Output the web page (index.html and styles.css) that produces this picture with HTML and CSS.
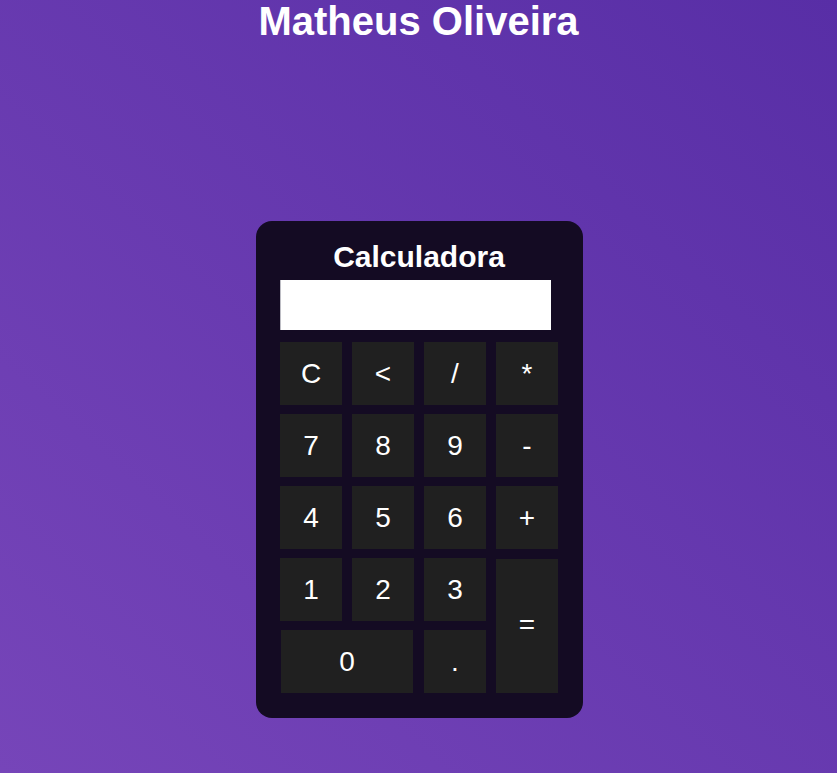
FILE: index.html
```html
<!DOCTYPE html>
<html lang="pt-BR">
<head>
<meta charset="UTF-8">
<title>Calculadora</title>
<link rel="stylesheet" href="styles.css">
</head>
<body>
<h1 class="page-title">Matheus Oliveira</h1>
<main class="calculator">
  <h2 class="calc-title">Calculadora</h2>
  <input class="display" type="text" readonly>
  <div class="keys">
    <button class="key">C</button>
    <button class="key">&lt;</button>
    <button class="key">/</button>
    <button class="key">*</button>
    <button class="key">7</button>
    <button class="key">8</button>
    <button class="key">9</button>
    <button class="key">-</button>
    <button class="key">4</button>
    <button class="key">5</button>
    <button class="key">6</button>
    <button class="key">+</button>
    <button class="key">1</button>
    <button class="key">2</button>
    <button class="key">3</button>
    <button class="key key-equal">=</button>
    <button class="key key-zero">0</button>
    <button class="key">.</button>
  </div>
</main>
</body>
</html>
```
FILE: styles.css
```css
html, body {
  margin: 0;
  padding: 0;
}
body {
  min-height: 773px;
  background: linear-gradient(to top right, #7645b9, #582ea6);
  font-family: "Liberation Sans", Arial, sans-serif;
  color: #fff;
  display: flex;
  flex-direction: column;
  align-items: center;
}
.page-title {
  margin: 0;
  font-size: 40px;
  line-height: 42px;
  font-weight: bold;
  text-align: center;
}
.calculator {
  margin-top: 179px;
  margin-left: 2px;
  width: 327px;
  box-sizing: border-box;
  padding: 18px 25px 25px 24px;
  background: #140b23;
  border-radius: 16px;
  display: flex;
  flex-direction: column;
}
.calc-title {
  margin: 0;
  font-size: 30px;
  line-height: 35px;
  font-weight: bold;
  text-align: center;
}
.display {
  margin-top: 6px;
  width: 271px;
  height: 50px;
  box-sizing: border-box;
  border: none;
  border-left: 1px solid #bdbdc4;
  background: #fff;
  padding: 0;
  outline: none;
}
.keys {
  margin-top: 12px;
  display: grid;
  grid-template-columns: repeat(4, 62px);
  grid-auto-rows: 63px;
  column-gap: 10px;
  row-gap: 9px;
}
.key {
  background: #202020;
  color: #fff;
  border: none;
  padding: 0;
  font-family: "Liberation Sans", Arial, sans-serif;
  font-size: 28px;
  cursor: pointer;
}
.key-equal {
  grid-column: 4;
  grid-row: 4 / span 2;
  margin-top: 1px;
  padding-bottom: 3px;
}
.key-zero {
  grid-column: 1 / span 2;
  margin-left: 1px;
  margin-right: 1px;
}
```
